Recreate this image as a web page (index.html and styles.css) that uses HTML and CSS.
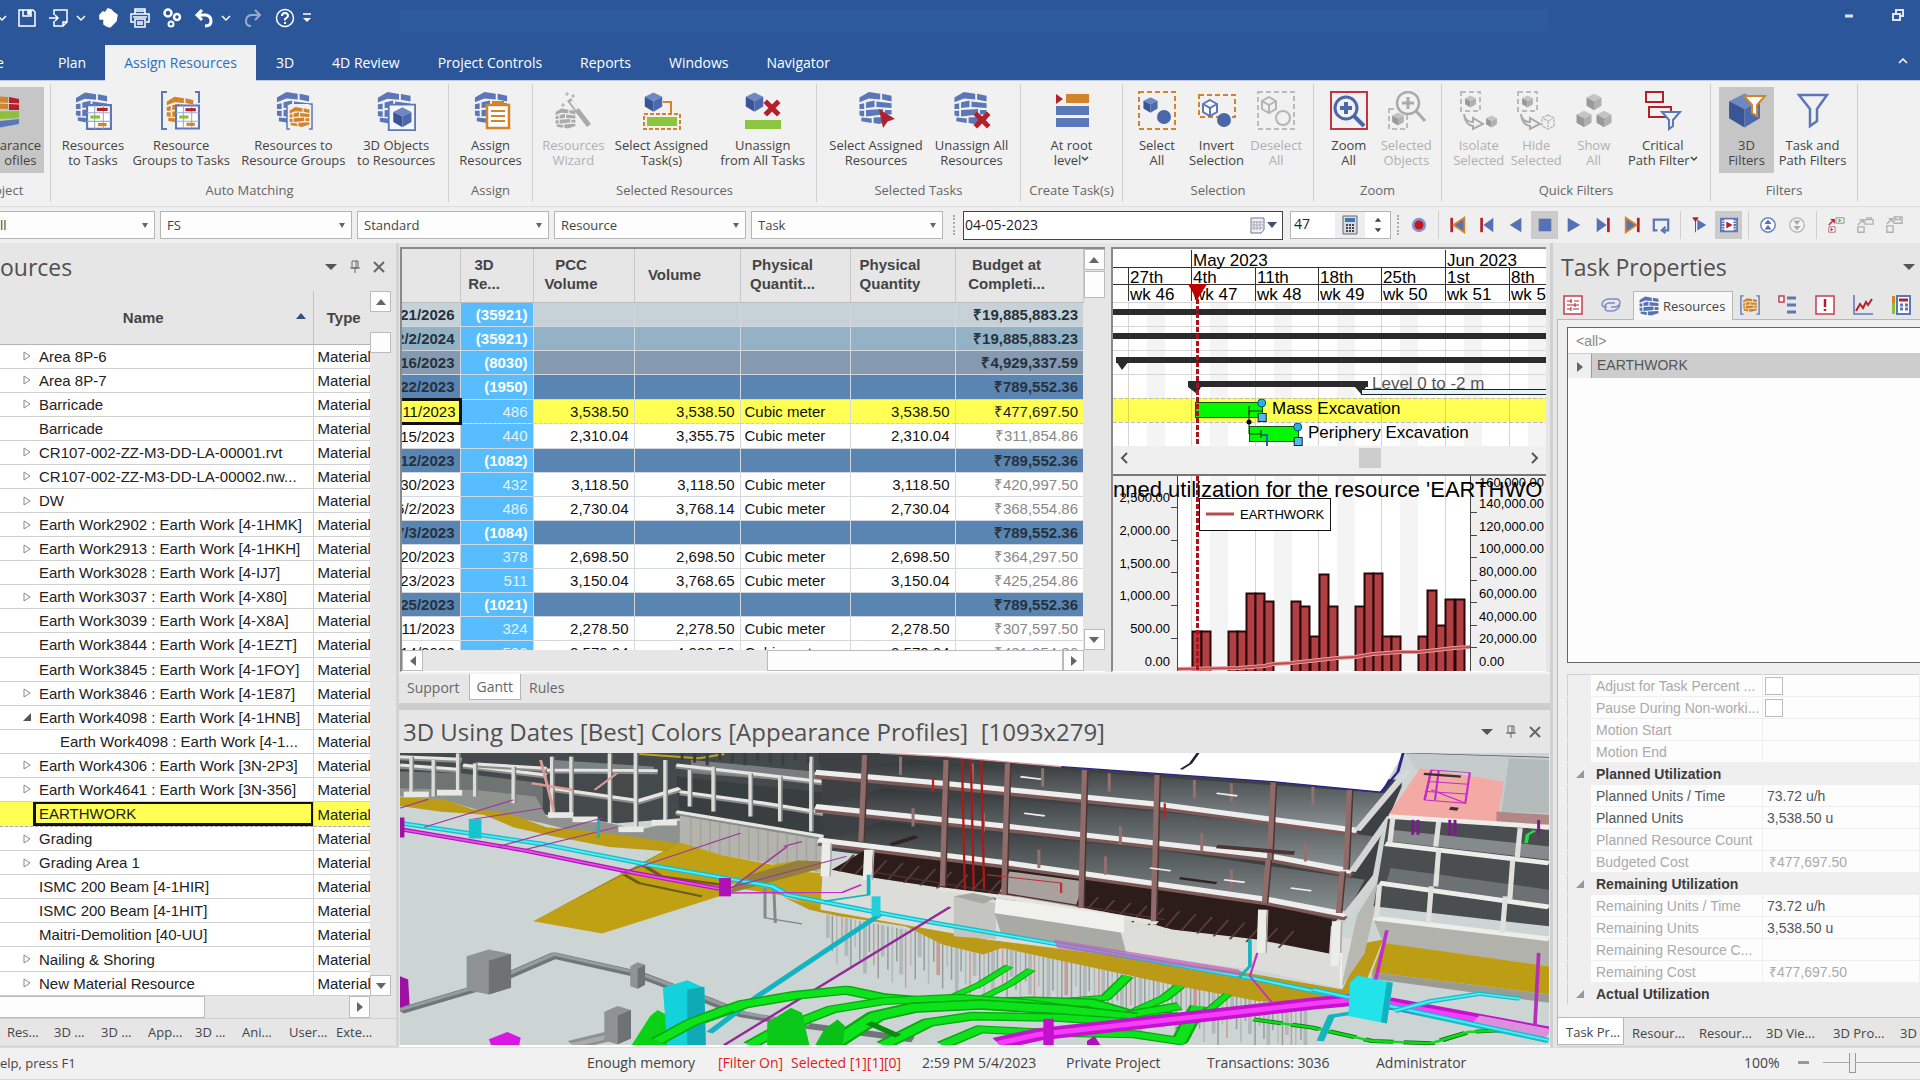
FILE: index.html
```html
<!DOCTYPE html>
<html lang="en">
<head>
<meta charset="utf-8">
<title>Project scheduling workspace</title>
<link rel="stylesheet" href="styles.css">
</head>
<body>
<svg class="defs" aria-hidden="true">
  <symbol id="stack" viewBox="0 0 36 36">
    <path d="M1 7 11 1 23 3V9L11 8 1 12ZM25 3 35 5V11L25 9ZM1 14 6 13V19L1 19ZM8 12 17 10V17L8 18ZM19 11 35 13V18L19 17ZM1 21 6 21V27L1 26ZM8 20 26 19V25L8 27ZM28 20H35V25L28 25ZM3 28 14 29V34L3 32ZM16 28 35 27V31L22 35 16 34Z"/>
  </symbol>
  <symbol id="cube" viewBox="0 0 24 24">
    <path class="c1" d="M12 1 22 6 12 11 2 6Z"/><path class="c2" d="M2 6 12 11V23L2 17Z"/><path class="c3" d="M22 6 12 11V23L22 17Z"/>
  </symbol>
  <symbol id="cal" viewBox="0 0 24 24">
    <path d="M1 1H23V23H1Z" fill="#fff" stroke="#5c77b8" stroke-width="2"/><path d="M8 1V23M16 1V23M1 8H23M1 16H23" stroke="#9aaad2" fill="none"/>
    <path d="M10 5H20" stroke="#b3202c" stroke-width="3"/><path d="M4 12H13" stroke="#8cc03c" stroke-width="3"/><path d="M11 19H19" stroke="#d2842a" stroke-width="3"/>
  </symbol>
  <symbol id="cross" viewBox="0 0 16 16"><path d="M2 2 14 14M14 2 2 14" stroke="#b3202c" stroke-width="4.500"/></symbol>
</svg>

<header class="titlebar">
  <div class="quick">
    <svg class="q q-chev" viewBox="0 0 10 10"><path d="M1 3 5 7 9 3"/></svg>
    <svg class="q" viewBox="0 0 20 20"><path d="M2 2H16L18 4V18H2ZM6 2V8H14V2"/><path d="M11 3H13V6H11Z" fill="#fff"/></svg>
    <svg class="q q-wide" viewBox="0 0 20 20"><path d="M5 7V2H18V14L14 18H5V13M18 14H14V18M0 10H9M6 7 9 10 6 13"/></svg>
    <svg class="q q-chev" viewBox="0 0 10 10"><path d="M1 3 5 7 9 3"/></svg>
    <svg class="q q-wide" viewBox="0 0 20 20"><path d="M2 7 5 4 7 5 10 1 13 2 15 4 19 7 18 13 15 16 12 19 9 18 6 16 6 11 2 11Z" fill="#fff"/></svg>
    <svg class="q q-wide" viewBox="0 0 20 20"><path d="M5 6V1H15V6M4 14H1V6H19V14H16M5 11H15V19H5ZM7 14H13M7 16H13M5 3H15M3 9H17"/></svg>
    <svg class="q q-wide" viewBox="0 0 20 20"><circle cx="6" cy="5" r="3.500" stroke-width="2.500"/><circle cx="15" cy="9" r="3" stroke-width="2.500"/><circle cx="9" cy="16" r="2.500" stroke-width="2"/></svg>
    <svg class="q q-wide" viewBox="0 0 20 20"><path d="M8 2 3 7 8 12M3 7H12Q17 8 17 13 17 18 11 18" stroke-width="3"/></svg>
    <svg class="q q-chev" viewBox="0 0 10 10"><path d="M1 3 5 7 9 3"/></svg>
    <svg class="q q-wide q-dim" viewBox="0 0 20 20"><path d="M12 2 17 7 12 12M17 7H8Q3 8 3 13 3 18 8 18" stroke-width="2"/></svg>
    <svg class="q q-wide" viewBox="0 0 20 20"><circle cx="10" cy="10" r="8.500"/><path d="M7 8Q7 5 10 5 13 5 13 8 13 9 10 11V12.500M10 14V16" stroke-width="2"/></svg>
    <svg class="q q-chev q-more" viewBox="0 0 10 10"><path d="M1 1H9"/><path d="M1 5H9L5 9Z" fill="#fff" stroke="none"/></svg>
  </div>
  <div class="caption"></div>
  <div class="winbtns">
    <svg viewBox="0 0 12 12"><path d="M2 7H10" stroke-width="3"/></svg>
    <svg viewBox="0 0 12 12"><path d="M1 5H8V11H1ZM4 5V1H11V7H8" stroke-width="2"/></svg>
  </div>
</header>
<nav class="tabs">
  <a class="cut" href="#">e</a><a href="#">Plan</a><a class="on" href="#">Assign Resources</a><a href="#">3D</a><a href="#">4D Review</a><a href="#">Project Controls</a><a href="#">Reports</a><a href="#">Windows</a><a href="#">Navigator</a>
  <svg class="collapse" viewBox="0 0 10 10"><path d="M1 7 5 3 9 7"/></svg>
</nav>

<section class="ribbon">
  <div class="group g-object">
    <div class="btns"><button class="rb sel left"><svg viewBox="0 0 40 40"><path d="M0 4 28 6V18L0 17Z" fill="#d2842a"/><path d="M29 6 39 8V19H29Z" fill="#b3202c"/><path d="M0 21 39 20V27L0 29Z" fill="#8cc03c"/><path d="M0 32 39 28V33L0 40Z" fill="#5c77b8"/><path d="M14 4V38M0 11 39 13" stroke="#ddd"/></svg><span>arance<br>ofiles</span></button></div>
    <p>oject</p>
  </div>
  <div class="group g-auto">
    <div class="btns">
      <button class="rb"><svg viewBox="0 0 40 40"><use href="#stack" x="2" width="33" height="34"/><use href="#cal" x="13" y="13" width="26" height="26"/></svg><span>Resources<br>to Tasks</span></button>
      <button class="rb"><svg viewBox="0 0 40 40"><use href="#stack" x="5" y="2" width="28" height="34" fill="#d2842a"/><path d="M6 1H1V38H6M34 1H38V12" fill="none" stroke="#5c77b8" stroke-width="2"/><use href="#cal" x="14" y="13" width="25" height="26"/></svg><span>Resource<br>Groups to Tasks</span></button>
      <button class="rb"><svg viewBox="0 0 40 40"><use href="#stack" x="3" width="34" height="34"/><path d="M14 13H40V39H14Z" fill="#f1f1f1"/><use href="#stack" x="16" y="15" width="21" height="22" fill="#d2842a"/><path d="M17 13H14V38H17M36 13H39V38H36" fill="none" stroke="#5c77b8" stroke-width="1.500"/></svg><span>Resources to<br>Resource Groups</span></button>
      <button class="rb"><svg class="big" viewBox="0 0 44 44"><use href="#stack" width="40" height="38"/><path d="M14 15H43V43H14Z" fill="#f4f6fb" stroke="#5c77b8" stroke-width="2"/><use href="#cube" x="17" y="17" width="24" height="24"/></svg><span>3D Objects<br>to Resources</span></button>
    </div>
    <p>Auto Matching</p>
  </div>
  <div class="group g-assign">
    <div class="btns"><button class="rb"><svg viewBox="0 0 40 40"><use href="#stack" x="3" width="34" height="34"/><path d="M16 14H38V37H16Z" fill="#fff" stroke="#d2842a" stroke-width="2.500"/><path d="M21 10H33V15H21Z" fill="#d2842a"/><path d="M20 20H34M20 25H34M20 30H34" stroke="#d2842a" stroke-width="2"/></svg><span>Assign<br>Resources</span></button></div>
    <p>Assign</p>
  </div>
  <div class="group g-selres">
    <div class="btns">
      <button class="rb" disabled><svg viewBox="0 0 40 40"><use href="#stack" x="2" y="16" width="21" height="23"/><path d="M14 10 18 7 38 33 34 36Z" fill="#aaa"/><path d="M17 11 20 9 26 17 23 19Z" fill="#eee"/><path d="M14 1V5M12 3H16M20 3V7M18 5H22M10 12V16M8 14H12" stroke="#aaa"/></svg><span>Resources<br>Wizard</span></button>
      <button class="rb"><svg viewBox="0 0 40 40"><use href="#cube" x="1" y="0" width="21" height="22"/><path d="M21 11H29V22" fill="none" stroke="#d2842a" stroke-width="2"/><path d="M2 23H38V38H2Z" fill="none" stroke="#d2842a" stroke-width="2" stroke-dasharray="4 2"/><path d="M5 26H35V35H5Z" fill="#8cc63f"/></svg><span>Select Assigned<br>Task(s)</span></button>
      <button class="rb"><svg viewBox="0 0 40 40"><use href="#cube" x="1" y="0" width="21" height="22"/><path d="M2 29H38V38H2Z" fill="#8cc63f"/><use href="#cross" x="20" y="8" width="18" height="18"/></svg><span>Unassign<br>from All Tasks</span></button>
    </div>
    <p>Selected Resources</p>
  </div>
  <div class="group g-seltasks">
    <div class="btns">
      <button class="rb"><svg viewBox="0 0 40 40"><use href="#stack" x="2" width="35" height="34"/><path d="M23 18 39 28 32 30 27 37Z" fill="#b3202c"/></svg><span>Select Assigned<br>Resources</span></button>
      <button class="rb"><svg viewBox="0 0 40 40"><use href="#stack" x="2" width="35" height="34"/><use href="#cross" x="22" y="20" width="18" height="18"/></svg><span>Unassign All<br>Resources</span></button>
    </div>
    <p>Selected Tasks</p>
  </div>
  <div class="group g-create">
    <div class="btns"><button class="rb"><svg viewBox="0 0 40 40"><path d="M4 3 11 8 4 13Z" fill="#b3202c"/><path d="M14 3H37V12H14Z" fill="#d2842a"/><path d="M4 15H37V24H4ZM4 27H37V36H4Z"/></svg><span>At root<br>level<svg class="dd" viewBox="0 0 8 8"><path d="M1 2 4 5 7 2"/></svg></span></button></div>
    <p>Create Task(s)</p>
  </div>
  <div class="group g-select">
    <div class="btns">
      <button class="rb"><svg viewBox="0 0 40 40"><path d="M2 1H38V38H2Z" class="dash"/><use href="#cube" x="5" y="5" width="17" height="18"/><circle cx="27" cy="26" r="7" fill="#4b67aa"/></svg><span>Select<br>All</span></button>
      <button class="rb"><svg viewBox="0 0 40 40"><path d="M2 4H38V26H2Z" class="dash"/><path d="M13 9 20 13V21L13 25 6 21V13ZM6 13 13 17 20 13M13 17V25" fill="#fff" stroke="#5c77b8" stroke-width="2"/><circle cx="27" cy="29" r="7" fill="#4b67aa"/></svg><span>Invert<br>Selection</span></button>
      <button class="rb" disabled><svg viewBox="0 0 40 40"><path d="M2 1H38V38H2Z" class="dash"/><path d="M13 6 20 10V18L13 22 6 18V10ZM6 10 13 14 20 10M13 14V22" fill="none" stroke="#b5b5b5" stroke-width="2"/><circle cx="27" cy="27" r="7" fill="none" stroke="#b5b5b5" stroke-width="2"/></svg><span>Deselect<br>All</span></button>
    </div>
    <p>Selection</p>
  </div>
  <div class="group g-zoom">
    <div class="btns">
      <button class="rb"><svg viewBox="0 0 40 40"><path d="M2 1H38V38H2Z" fill="none" stroke="#c03540" stroke-width="2"/><circle cx="17" cy="17" r="11" fill="none" stroke="#4b67aa" stroke-width="3"/><path d="M25 25 35 35" stroke="#4b67aa" stroke-width="4"/><path d="M17 11V23M11 17H23" stroke="#4b67aa" stroke-width="4"/></svg><span>Zoom<br>All</span></button>
      <button class="rb" disabled><svg viewBox="0 0 40 40"><path d="M3 18H21V38H3Z" class="dash"/><use href="#cube" x="5" y="20" width="14" height="16"/><circle cx="22" cy="12" r="11" fill="#f1f1f1" stroke="#aaa" stroke-width="2.500"/><path d="M30 20 39 30" stroke="#aaa" stroke-width="3"/><path d="M22 6V18M16 12H28" stroke="#aaa" stroke-width="3"/></svg><span>Selected<br>Objects</span></button>
    </div>
    <p>Zoom</p>
  </div>
  <div class="group g-quick">
    <div class="btns">
      <button class="rb" disabled><svg viewBox="0 0 40 40"><path d="M2 1H21V20H2Z" class="dash"/><use href="#cube" x="5" y="3" width="13" height="15"/><path d="M5 23Q6 31 14 31V27L24 33 14 38V35Q6 34 5 23Z" fill="none" stroke="#aaa" stroke-width="2"/><use href="#cube" x="26" y="23" width="13" height="15"/></svg><span>Isolate<br>Selected</span></button>
      <button class="rb" disabled><svg viewBox="0 0 40 40"><path d="M2 1H21V20H2Z" class="dash"/><use href="#cube" x="5" y="3" width="13" height="15"/><path d="M5 23Q6 31 14 31V27L24 33 14 38V35Q6 34 5 23Z" fill="none" stroke="#aaa" stroke-width="2"/><path d="M32 24 38 27V35L32 38 26 35V27ZM28 28 32 30 36 28M32 30V36" fill="none" stroke="#bbb" stroke-width="1.500" stroke-dasharray="3 1"/></svg><span>Hide<br>Selected</span></button>
      <button class="rb" disabled><svg viewBox="0 0 40 40"><use href="#cube" x="11" y="2" width="18" height="18"/><use href="#cube" x="1" y="19" width="18" height="18"/><use href="#cube" x="21" y="19" width="18" height="18"/></svg><span>Show<br>All</span></button>
      <button class="rb"><svg viewBox="0 0 40 40"><path d="M3 1H20V11H3ZM6 16H28V26H6Z" fill="none" stroke="#b3202c" stroke-width="2"/><path d="M19 21H37L30 29V35L26 38V29Z" fill="#f1f1f1" stroke="#5c77b8" stroke-width="2"/></svg><span>Critical<br>Path Filter<svg class="dd" viewBox="0 0 8 8"><path d="M1 2 4 5 7 2"/></svg></span></button>
    </div>
    <p>Quick Filters</p>
  </div>
  <div class="group g-filters">
    <div class="btns">
      <button class="rb sel"><svg viewBox="0 0 40 40"><use href="#cube" x="-1" y="1" width="37" height="37"/><path d="M17 5H38L30 14V25L25 22V14Z" fill="#fff" stroke="#d2842a" stroke-width="2"/></svg><span>3D<br>Filters</span></button>
      <button class="rb"><svg viewBox="0 0 40 40"><path d="M6 4H34L24 18V30L17 35V18Z" fill="none" stroke="#5c77b8" stroke-width="2.500"/></svg><span>Task and<br>Path Filters</span></button>
    </div>
    <p>Filters</p>
  </div>
</section>

<section class="toolbar">
  <label class="combo first"><select aria-label="Layer"><option>ll</option></select></label>
  <label class="combo"><select aria-label="Link type"><option>FS</option></select></label>
  <label class="combo"><select aria-label="Calendar"><option>Standard</option></select></label>
  <label class="combo"><select aria-label="Resource"><option>Resource</option></select></label>
  <label class="combo"><select aria-label="Task"><option>Task</option></select></label>
  <i class="grip"></i>
  <div class="date"><input aria-label="Date" value="04-05-2023"><svg viewBox="0 0 28 18"><path d="M1 2H14V14L11 17H1Z" fill="#eef" stroke="#777"/><path d="M4 5V14M7 5V14M10 5V14M2 6H13M2 9H13M2 12H13" stroke="#aaa"/><path d="M17 6H27L22 12Z" fill="#3c5070"/></svg></div>
  <div class="num"><input aria-label="Day" value="47"><svg class="calc" viewBox="0 0 16 20"><path d="M1 1H15V19H1Z" fill="#d8dbe0" stroke="#667"/><path d="M3 3H13V7H3Z" fill="#3f78b8"/><path d="M4 10H12M4 13H12M4 16H12" stroke="#445" stroke-width="2" stroke-dasharray="2 1"/></svg><svg class="spin" viewBox="0 0 10 20"><path d="M1 6 5 1 9 6ZM1 14H9L5 19Z" fill="#444"/></svg></div>
  <i class="grip tight"></i>
  <button class="tb" aria-label="Record"><svg viewBox="0 0 20 20"><circle cx="10" cy="10" r="8" fill="#8794c8"/><circle cx="10" cy="10" r="5" fill="#c0161e"/></svg></button>
  <i class="bar"></i>
  <button class="tb" aria-label="First"><svg viewBox="0 0 20 20"><path d="M3 2V18" stroke="#b3202c" stroke-width="3"/><path d="M17 2V18L5 10Z" stroke="#d2842a" stroke-width="2"/></svg></button>
  <button class="tb" aria-label="Previous"><svg viewBox="0 0 20 20"><path d="M4 2V18" stroke="#b3202c" stroke-width="3"/><path d="M17 2V18L6 10Z"/></svg></button>
  <button class="tb" aria-label="Back"><svg viewBox="0 0 20 20"><path d="M16 2V18L3 10Z"/></svg></button>
  <button class="tb on" aria-label="Stop"><svg viewBox="0 0 20 20"><path d="M3 3H17V17H3Z"/></svg></button>
  <button class="tb" aria-label="Play"><svg viewBox="0 0 20 20"><path d="M3 2V18L17 10Z"/></svg></button>
  <button class="tb" aria-label="Next"><svg viewBox="0 0 20 20"><path d="M3 2V18L14 10Z"/><path d="M16 2V18" stroke="#b3202c" stroke-width="3"/></svg></button>
  <button class="tb" aria-label="Last"><svg viewBox="0 0 20 20"><path d="M17 2V18" stroke="#b3202c" stroke-width="3"/><path d="M3 2V18L15 10Z" stroke="#d2842a" stroke-width="2"/></svg></button>
  <button class="tb" aria-label="Loop"><svg viewBox="0 0 20 20"><path d="M6 16H2V4H18V16H12M15 12 11 16 15 19" fill="none" stroke="#5c77b8" stroke-width="2.500"/></svg></button>
  <i class="bar"></i>
  <button class="tb" aria-label="Marker"><svg viewBox="0 0 20 20"><path d="M5 4V18M2 2H8L5 6Z" stroke="#b3202c" fill="#b3202c"/><path d="M7 4 17 10 7 16Z"/></svg></button>
  <button class="tb on" aria-label="Movie"><svg viewBox="0 0 20 20"><path d="M1 3H19V17H1Z" fill="#fff" stroke="#5c77b8" stroke-width="2"/><path d="M3.500 3V17M16.500 3V17" stroke="#5c77b8" stroke-width="3" stroke-dasharray="2 1"/><path d="M7 6 14 10 7 14Z" fill="#b3202c"/></svg></button>
  <i class="bar"></i>
  <button class="tb" aria-label="Up"><svg viewBox="0 0 20 20"><circle cx="10" cy="10" r="8" fill="#fff" stroke="#5c77b8" stroke-width="1.500"/><path d="M10 4 14 9H6ZM10 10 14 15H6Z"/></svg></button>
  <button class="tb" aria-label="Down"><svg viewBox="0 0 20 20"><circle cx="10" cy="10" r="8" fill="#f4f4f4" stroke="#b5b5b5" stroke-width="1.500"/><path d="M10 10 14 5H6ZM10 16 14 11H6Z" fill="#aaa"/></svg></button>
  <i class="bar"></i>
  <button class="tb" aria-label="Capture"><svg viewBox="0 0 20 20"><path d="M10 2H19V8H10Z" fill="#eee" stroke="#8a8a9a"/><path d="M2 12H9V18H2Z" fill="#fff" stroke="#b06070"/><path d="M4 13V17L7 15Z" fill="#b3202c"/><path d="M2 10 8 4M4 4H8V8" fill="none" stroke="#b3202c" stroke-width="1.500"/><path d="M13 3V7L16 5Z" fill="#4a4"/></svg></button>
  <button class="tb" aria-label="Lock"><svg viewBox="0 0 20 20"><path d="M10 4H19V9H10ZM12 4V2H17V4M2 12H9V18H2ZM2 10 8 4M4 4H8V8" fill="none" stroke="#b0b0b0" stroke-width="1.500"/></svg></button>
  <button class="tb" aria-label="Save view"><svg viewBox="0 0 20 20"><path d="M10 1H19V8H10ZM12 1V4H17V1M2 11H9V18H2ZM2 9 8 3M4 3H8V7" fill="none" stroke="#b0b0b0" stroke-width="1.500"/></svg></button>
</section>

<main class="main">
  <section class="resources">
    <div class="head"><h2>ources</h2><span class="tools"><svg viewBox="0 0 14 14"><path d="M1 4H13L7 10Z" fill="#555"/></svg><svg viewBox="0 0 14 14"><path d="M4 1H10V8H4ZM2 8H12M7 8V13M8 1V8" class="ln"/></svg><svg viewBox="0 0 14 14"><path d="M2 2 12 12M12 2 2 12" class="ln"/></svg></span></div>
    <div class="res-body">
      <table class="res"><colgroup><col class="c-name"><col></colgroup>
        <thead><tr><th>Name<svg viewBox="0 0 10 10"><path d="M0 8 5 2 10 8Z" fill="#34507c"/></svg></th><th class="ty">Type</th></tr></thead>
        <tbody id="resRows"></tbody>
      </table>
      <div class="vs res-vs"><b class="up"></b><b class="th"></b><b class="dn"></b></div>
    </div>
    <div class="hs res-hs"><b class="th"></b><b class="rt"></b></div>
    <nav class="btabs res-tabs"><a href="#">Res...</a><a href="#">3D ...</a><a href="#">3D ...</a><a href="#">App...</a><a href="#">3D ...</a><a href="#">Ani...</a><a href="#">User...</a><a href="#">Exte...</a></nav>
  </section>

  <section class="center">
    <div class="split">
      <div class="cost">
        <div class="cost-body">
          <div class="clip"><table class="costs">
            <colgroup><col class="k1"><col class="k2"><col class="k3"><col class="k4"><col class="k5"><col class="k6"><col class="k7"></colgroup>
            <thead><tr><th></th><th>3D<br>Re...</th><th>PCC<br>Volume</th><th>Volume</th><th>Physical<br>Quantit...</th><th>Physical<br>Quantity</th><th>Budget at<br>Completi...</th></tr></thead>
            <tbody id="costRows"></tbody>
          </table></div>
          <div class="vs cost-vs"><b class="up"></b><b class="th"></b><b class="dn"></b></div>
        </div>
        <div class="hs cost-hs"><b class="lf"></b><b class="th"></b><b class="rt"></b></div>
      </div>
      <div class="timeline">
        <svg id="gantt" class="gantt"></svg>
        <div class="gscroll"><svg viewBox="0 0 10 12"><path d="M8 1 3 6 8 11"/></svg><i></i><svg viewBox="0 0 10 12"><path d="M2 1 7 6 2 11"/></svg></div>
        <svg id="usage" class="usage"></svg>
      </div>
    </div>
    <nav class="ctabs"><a href="#">Support</a><a class="on" href="#">Gantt</a><a href="#">Rules</a></nav>
    <div class="head view-head"><h2>3D Using Dates [Best] Colors [Appearance Profiles]&nbsp; [1093x279]</h2><span class="tools"><svg viewBox="0 0 14 14"><path d="M1 4H13L7 10Z" fill="#555"/></svg><svg viewBox="0 0 14 14"><path d="M4 1H10V8H4ZM2 8H12M7 8V13M8 1V8" class="ln"/></svg><svg viewBox="0 0 14 14"><path d="M2 2 12 12M12 2 2 12" class="ln"/></svg></span></div>
    <div class="view"><svg id="scene" viewBox="7 39 1552 878" preserveAspectRatio="none"></svg></div>
  </section>

  <section class="props">
    <div class="head"><h2>Task Properties</h2><span class="tools"><svg viewBox="0 0 14 14"><path d="M1 4H13L7 10Z" fill="#555"/></svg></span></div>
    <nav class="ptabs">
      <a href="#" aria-label="General"><svg viewBox="0 0 20 20"><path d="M1 1H19V19H1Z" class="r"/><path d="M4 6H9M11 6H16M4 10H16M4 14H8M10 14H16M8 4V8M12 8V12M8 12V16" stroke="#b3202c"/></svg></a>
      <a href="#" aria-label="Links"><svg viewBox="0 0 20 20"><path d="M6 12H4Q1 12 1 9 2 5 7 4H15Q19 4 19 8 18 12 13 12H10M14 8H8Q3 9 4 13 4 16 8 16H12Q17 15 19 10" fill="none" stroke="#7d90c6" stroke-width="1.500"/></svg></a>
      <a href="#" class="on"><svg viewBox="0 0 20 20"><use href="#stack" width="20" height="20"/></svg>Resources</a>
      <a href="#" aria-label="Resource groups"><svg viewBox="0 0 22 22"><use href="#stack" x="3" y="2" width="16" height="18" fill="#d2842a"/><path d="M4 1H1V21H4M18 1H21V21H18" fill="none" stroke="#5c77b8" stroke-width="1.500"/></svg></a>
      <a href="#" aria-label="Codes"><svg viewBox="0 0 20 20"><path d="M2 1H7V7H2Z" class="r"/><path d="M10 3H19M10 10H19M10 17H19" stroke="#5c77b8" stroke-width="3"/></svg></a>
      <a href="#" aria-label="Alerts"><svg viewBox="0 0 20 20"><path d="M1 1H19V19H1Z" class="r"/><path d="M10 4V12M10 14V16" stroke="#b3202c" stroke-width="2.500"/></svg></a>
      <a href="#" aria-label="Curve"><svg viewBox="0 0 20 20"><path d="M1 0V19H20" fill="none" stroke="#5c77b8" stroke-width="1.500"/><path d="M3 16 7 9 10 13 13 7 15 10 19 4" fill="none" stroke="#b3202c" stroke-width="2"/></svg></a>
      <a href="#" aria-label="Calculator"><svg viewBox="0 0 20 20"><path d="M1 1H4V19H1Z" fill="#d2842a"/><path d="M1 8H4V19H1Z" fill="#8cc03c"/><path d="M6 1H19V19H6Z" fill="#fff" stroke="#5c77b8" stroke-width="2"/><path d="M8 5H17" stroke="#b3202c" stroke-width="3"/><path d="M9 10H17M9 14H17" stroke="#5c77b8" stroke-width="3" stroke-dasharray="3 2"/></svg></a>
    </nav>
    <div class="sheet">
      <div class="list"><div class="all">&lt;all&gt;</div><div class="item"><i><svg viewBox="0 0 8 12"><path d="M1 1 7 6 1 11Z" fill="#666"/></svg></i><span>EARTHWORK</span></div></div>
      <table class="grid"><colgroup><col class="p0"><col class="p1"><col></colgroup><tbody id="propRows"></tbody></table>
    </div>
    <nav class="btabs prop-tabs"><a class="on" href="#">Task Pr...</a><a href="#">Resour...</a><a href="#">Resour...</a><a href="#">3D Vie...</a><a href="#">3D Pro...</a><a href="#">3D</a></nav>
  </section>
</main>

<footer class="status">
  <span class="s-help">elp, press F1</span><span class="s-mem">Enough memory</span><span class="s-filter">[Filter On]</span><span class="s-sel">Selected [1][1][0]</span><span class="s-time">2:59 PM 5/4/2023</span><span class="s-proj">Private Project</span><span class="s-trans">Transactions: 3036</span><span>Administrator</span>
  <div class="zoom"><span>100%</span><i></i><input type="range" aria-label="Zoom" min="0" max="100" value="26"></div>
</footer>
<script src="app.js"></script>
</body>
</html>
```
FILE: styles.css
```css
* { box-sizing: border-box; }
html, body { height: 100%; }
body {
  margin: 0; display: flex; flex-direction: column; overflow: hidden;
  font: 14px/18px "Open Sans", "Noto Sans", sans-serif; color: #444; background: #e6e6e6;
}
a { color: inherit; text-decoration: none; }
h2, p { margin: 0; font-weight: 400; }
button, input, select { font: inherit; color: inherit; }
svg { display: block; flex: none; }
.defs { position: absolute; width: 0; height: 0; }
.c1 { fill: var(--cube1, #6e88c4); } .c2 { fill: var(--cube2, #3a5596); } .c3 { fill: var(--cube3, #4d69ad); }

.titlebar { flex: none; height: 45px; background: #2b579a; display: flex; align-items: flex-start; }
.quick { width: 400px; height: 36px; display: flex; align-items: center; }
.q { width: 20px; height: 20px; margin-left: 10px; fill: none; stroke: #fff; stroke-width: 1.5; }
.q-wide { margin-left: 12px; }
.q-chev { width: 10px; height: 10px; margin-left: 7px; }
.quick .q-chev:first-child { margin-left: -3px; }
.q-dim { opacity: .5; }
.caption { flex: 1; height: 21px; margin-top: 10px; background: #2e5b9e; }
.winbtns { width: 372px; display: flex; justify-content: flex-end; gap: 37px; padding: 9px 16px 0 0; }
.winbtns svg { width: 12px; height: 12px; fill: none; stroke: #dfe6f2; }

.tabs { flex: none; height: 36px; background: #2b579a; display: flex; color: #fff; border-bottom: 1px solid #c3c9dc; }
.tabs a { padding: 9px 19px 0; }
.tabs .cut { padding: 9px 35px 0 0; margin-left: -4px; }
.tabs .on { background: #f1f1f1; color: #2b6fc0; margin: 0 1px -1px 0; }
.collapse { width: 10px; height: 10px; margin: 11px 12px 0 auto; fill: none; stroke: #fff; stroke-width: 1.5; }

.ribbon { flex: none; height: 126px; background: #f1f1f1; display: flex; border-bottom: 1px solid #dcdcdc; padding: 3px 0 4px; }
.group { border-right: 1px solid #d0d0d0; display: flex; flex-direction: column; font-size: 13px; }
.btns { display: flex; flex: 1; padding-top: 3px; }
.group p { text-align: center; color: #666; line-height: 22px; padding-bottom: 1px; }
.rb { flex: 1; width: 0; height: 86px; padding: 4px 0 0; border: 0; background: none; display: flex; flex-direction: column; align-items: center; line-height: 15px; white-space: nowrap; fill: #5c77b8; }
.rb > svg { width: 40px; height: 40px; margin-bottom: 7px; }
.rb > .big { width: 44px; }
.rb span { display: block; }
.rb.sel { background: #c6c6c6; }
.rb.left { align-items: flex-end; padding-right: 3px; }
.rb.left > svg { margin-right: 21px; }
.rb:disabled { color: #b0b0b0; fill: #aaa; --cube1: #c4c4c4; --cube2: #999; --cube3: #b0b0b0; }
.dash { fill: none; stroke: #d2842a; stroke-width: 2; stroke-dasharray: 5 3; }
.rb:disabled .dash { stroke: #bbb; }
.dd { display: inline-block; width: 8px; height: 8px; fill: none; stroke: #444; stroke-width: 1.5; vertical-align: 2px; }
.g-object { width: 51px; } .g-object .btns { padding-right: 6px; } .g-object p { text-align: left; margin-left: -6px; }
.g-auto { width: 398px; } .g-auto .btns { padding: 3px 7px 0 8px; }
.g-auto .rb:nth-child(1) { flex-grow: 68; } .g-auto .rb:nth-child(2) { flex-grow: 109; } .g-auto .rb:nth-child(3) { flex-grow: 116; } .g-auto .rb:nth-child(4) { flex-grow: 90; }
.g-assign { width: 84px; }
.g-selres { width: 284px; } .g-selres .rb:nth-child(1) { flex-grow: 81; } .g-selres .rb:nth-child(2) { flex-grow: 96; } .g-selres .rb:nth-child(3) { flex-grow: 107; }
.g-seltasks { width: 204px; } .g-seltasks .btns { padding: 3px 7px 0 5px; } .g-seltasks .rb:first-child { flex-grow: 1.3; }
.g-create { width: 102px; }
.g-select { width: 191px; } .g-select .btns { padding: 3px 7px 0 4px; }
.g-zoom { width: 128px; } .g-zoom .btns { padding: 3px 6px 0 6px; }
.g-quick { width: 269px; } .g-quick .btns { padding: 3px 7px 0 8px; } .g-quick .rb:nth-child(4) { flex-grow: 1.4; }
.g-filters { width: 147px; } .g-filters .btns { padding: 3px 6px 0 8px; } .g-filters .rb:nth-child(2) { flex-grow: 1.4; }

.toolbar { flex: none; height: 36px; background: #efefef; display: flex; align-items: center; font-size: 13px; }
.combo { position: relative; width: 192px; height: 28px; margin-right: 5px; }
.combo.first { width: 155px; }
.combo select { width: 100%; height: 100%; appearance: none; border: 1px solid #b5b5b5; background: #fdfdfd; padding: 0 6px; border-radius: 0; }
.combo.first select { border-left: 0; padding: 0; }
.combo::after { content: ""; position: absolute; right: 7px; top: 12px; border: 3px solid transparent; border-top: 5px solid #666; border-bottom: 0; }
.grip { width: 2px; height: 20px; margin: 0 8px 0 5px; border-left: 2px dotted #aaa; }
.grip.tight { margin: 0 6px; }
.date { width: 320px; height: 29px; margin-right: 7px; border: 1px solid #444; background: #fff; display: flex; align-items: center; padding-right: 4px; }
.date input, .num input { flex: 1; min-width: 0; border: 0; background: none; padding: 0 1px; color: #222; font-size: 14px; }
.date svg { width: 28px; height: 18px; }
.num { width: 101px; height: 28px; border: 1px solid #b5b5b5; background: #fff; display: flex; align-items: center; }
.num input { padding: 0 0 3px 3px; }
.calc { width: 30px; height: 26px; padding: 3px 7px; background: #eee; }
.spin { width: 8px; height: 16px; margin: 0 8px 0 9px; }
.tb { width: 27px; height: 28px; margin-right: 2px; border: 0; padding: 0; background: none; display: flex; align-items: center; justify-content: center; fill: #5672b5; }
.tb svg { width: 18px; height: 18px; }
.tb.on { background: #cbcbcb; }
.bar { width: 1px; height: 28px; background: #cfcfcf; margin: 0 5px 0 4px; }

.main { flex: 1; min-height: 0; display: flex; }
.head { flex: none; display: flex; align-items: center; justify-content: space-between; height: 49px; }
.head h2 { font-size: 23px; line-height: 28px; color: #505050; white-space: nowrap; }
.tools { display: flex; gap: 10px; } .tools svg { width: 14px; height: 14px; }
.ln { fill: none; stroke: #666; stroke-width: 2; }
.tools svg:nth-child(2) .ln { stroke-width: 1; }

.resources { flex: none; width: 399px; display: flex; flex-direction: column; border-right: 3px solid #d4d4d4; }
.resources .head { padding-right: 10px; height: 48px; }
.res-body { display: flex; flex: 0 1 705px; min-height: 0; overflow: hidden; }
table { border-collapse: collapse; table-layout: fixed; }
td, th { padding: 0; }
.res { width: 370px; font: 15px/23px "Liberation Sans", sans-serif; color: #222; }
.c-name { width: 313px; }
.res thead tr { height: 53px; }
.res th { position: relative; border-bottom: 1px solid #b5b5b5; border-right: 1px solid #c4c4c4; color: #444; text-align: center; }
.res th:first-child { padding-right: 26px; }
.res th svg { position: absolute; right: 7px; top: 20px; width: 10px; height: 10px; }
.res th.ty { border-right: 0; padding-left: 4px; }
.res td { height: 24px; background: #fff; border-bottom: 1px solid #d0d0d0; white-space: nowrap; overflow: hidden; }
.res td:first-child { border-right: 1px solid #d0d0d0; }
.res td:last-child { padding-left: 4px; }
.nm { display: flex; align-items: center; padding-left: 23px; }
.nm b { font-weight: 400; }
.nm svg { width: 10px; height: 10px; margin-right: 6px; }
.nm.sub { padding-left: 44px; }
.res .hit td { background: #ffff54; border-bottom: 1px dashed #aaa; }
.hit .nm b { margin: -1px -1px 0 -6px; padding-left: 3px; flex: 1; border: 3px solid #111; line-height: 19px; }

.vs { display: flex; flex-direction: column; } .hs { display: flex; }
.vs b, .hs b { display: flex; align-items: center; justify-content: center; background: #fdfdfd; border: 1px solid #bbb; flex: none; width: 21px; height: 21px; }
.up::after, .dn::after, .lf::after, .rt::after { content: ""; border: 5px solid transparent; }
.up::after { border-bottom: 6px solid #666; border-top: 0; } .dn::after { border-top: 6px solid #666; border-bottom: 0; }
.lf::after { border-right: 6px solid #666; border-left: 0; } .rt::after { border-left: 6px solid #666; border-right: 0; }
.res-vs .up { margin-bottom: 20px; } .vs .dn { margin-top: auto; }
.res-hs { width: 370px; height: 22px; justify-content: space-between; } .res-hs .th { width: 205px; border-left: 0; }
.hs b { height: 22px; }
.btabs { display: flex; margin-top: auto; }
.res-tabs { height: 29px; border-top: 1px solid #d0d0d0; border-bottom: 1px solid #d0d0d0; padding: 4px 0 0 7px; font-size: 13px; }
.res-tabs a { flex: none; width: 47px; white-space: nowrap; }

.center { flex: 1; min-width: 0; display: flex; flex-direction: column; padding-top: 4px; border-right: 1px solid #d0d0d0; }
.split { flex: none; height: 425px; display: flex; gap: 6px; padding: 0 4px 0 1px; }
.cost { width: 705px; border: 2px solid #8a8a8a; border-right: 0; border-bottom: 1px solid #fff; display: flex; flex-direction: column; }
.cost-body { flex: 1; min-height: 0; display: flex; }
.clip { overflow: hidden; }
.costs { width: 681px; font: 15px/23px "Liberation Sans", sans-serif; color: #111; }
.k1 { width: 58px; } .k2 { width: 73px; } .k3 { width: 101px; } .k4 { width: 106px; } .k5 { width: 110px; } .k6 { width: 105px; } .k7 { width: 128px; }
.costs th { height: 53px; line-height: 19px; color: #444; padding: 0 25px 2px 0; border-right: 1px solid #c8c8c8; border-bottom: 1px solid #bbb; background: #e6e6e6; }
.costs td { height: 24px; border: solid #d3d8de; border-width: 0 1px 1px 0; padding-right: 5px; text-align: right; white-space: nowrap; overflow: hidden; background: #fff; }
.costs td:nth-child(2) { background: #57bdff; color: #e0f4ff; }
.costs td:nth-child(5) { text-align: left; padding-left: 4px; }
.costs td:last-child { color: #888; border-right: 0; }
.costs td div { display: flex; justify-content: flex-end; overflow: hidden; }
.costs .l1 td, .costs .l2 td, .costs .l3 td, .costs .l4 td { font-weight: 700; color: #26323c; }
.costs .l1 td { background: #c6d1d8; } .costs .l2 td { background: #93b2c6; } .costs .l3 td { background: #8599b0; } .costs .l4 td { background: #5a84b2; }
.costs tr[class^="l"] td:nth-child(2) { color: #fff; background: #57bdff; }
.costs .hit td { background: #ffff54; border-bottom: 1px dashed #ccc; } .costs .hit td:last-child { color: #222; }
.costs .hit td:nth-child(2) { background: #57bdff; }
.costs .hit td:first-child { border: 3px solid #111; border-left: 0; padding-right: 3px; line-height: 19px; }
.cost-vs .th { height: 27px; margin-top: 1px; } .cost-vs b { width: 21px; }
.cost-hs { height: 21px; width: 682px; } .cost-hs b { height: 21px; } .cost-hs .th { width: 296px; margin-left: auto; }
.timeline { flex: 1; min-width: 0; border: 2px solid #8a8a8a; border-right: 0; border-bottom: 1px solid #fff; background: #efefef; display: flex; flex-direction: column; }
.gantt { width: 100%; height: 197px; background: #fff; font: 17px "Liberation Sans", sans-serif; }
.gscroll { height: 24px; display: flex; align-items: center; justify-content: space-between; padding: 0 6px; }
.gscroll svg { width: 10px; height: 12px; fill: none; stroke: #555; stroke-width: 2; }
.gscroll i { width: 22px; height: 20px; background: #cdcdcd; margin: 0 -40px 0 40px; }
.usage { width: 100%; flex: 1; min-height: 0; margin-top: 4px; border-top: 2px solid #777; background: #efefef; font: 13px "Liberation Sans", sans-serif; }
.ctabs { flex: none; height: 38px; display: flex; border-bottom: 7px solid #cdcdcd; border-top: 2px solid #f4f4f4; font-size: 14px; color: #666; }
.ctabs a { padding: 5px 9px 0 8px; height: 26px; }
.ctabs .on { background: #fff; border: 1px solid #b5b5b5; border-top: 0; padding: 4px 7px 0; }
.view-head { height: 43px; padding: 0 8px 0 4px; }
.view-head h2 { font-size: 24px; }
.view { flex: 1; min-height: 0; padding: 0 1px; border-bottom: 2px solid #fff; }
.view svg { width: 100%; height: 100%; }

.props { flex: none; width: 369px; display: flex; flex-direction: column; padding-left: 4px; border-left: 2px solid #d0d0d0; }
.props .head { padding: 0 4px; height: 48px; }
.ptabs { flex: none; height: 28px; display: flex; padding-left: 6px; }
.ptabs a { flex: none; width: 38px; display: flex; align-items: center; }
.ptabs a:nth-child(2) { width: 32px; }
.ptabs a:nth-child(4) svg { width: 22px; }
.ptabs .on { width: 100px; gap: 4px; padding-left: 5px; margin-right: 6px; font-size: 13px; background: #f7f7f7; border: 1px solid #b8b8b8; border-bottom: 0; position: relative; margin-bottom: -1px; }
.ptabs svg { width: 20px; height: 20px; fill: #5672b5; }
.ptabs svg .r { fill: #fff; stroke: #c83c4a; stroke-width: 1.5; }
.sheet { flex: 1; min-height: 0; display: flex; flex-direction: column; border: 1px solid #b8b8b8; border-right: 0; background: #efefef; padding: 7px 0 12px 9px; font: 14px/20px "Liberation Sans", sans-serif; }
.list { flex: 1; border: 1px solid #666; border-right: 0; background: #fdfdfd; margin-bottom: 11px; }
.all { height: 26px; padding: 3px 8px; color: #888; border-bottom: 1px solid #ccc; }
.item { display: flex; height: 24px; background: #cdcdcd; color: #555; line-height: 23px; }
.item i { width: 24px; background: #efefef; border-right: 1px solid #999; padding: 7px 8px; margin-right: 5px; } .item svg { width: 8px; height: 12px; }
.grid { width: 100%; border: 1px solid #d0d0d0; border-right: 0; }
.p0 { width: 23px; } .p1 { width: 172px; }
.grid td { height: 22px; background: #fdfdfd; border: solid #efefef; border-width: 0 1px 1px 0; white-space: nowrap; color: #555; line-height: 20px; }
.grid td:nth-child(1) { background: #efefef; }
.grid td:nth-child(2) { padding-left: 5px; }
.grid td:nth-child(3) { padding-left: 4px; }
.grid .cat td { background: #efefef; font-weight: 700; color: #3c3c3c; }
.grid .dim td:nth-child(2) { color: #aaa; }
.grid td.cost-v { color: #aaa; padding-left: 6px; }
.grid svg { width: 8px; height: 8px; margin-left: 8px; }
.grid input { appearance: none; display: block; width: 18px; height: 18px; margin: 0 0 0 -2px; border: 1px solid #bbb; background: #fff; }
.prop-tabs { height: 29px; border-bottom: 1px solid #d0d0d0; font-size: 13px; overflow: hidden; flex: none; }
.prop-tabs a { flex: none; width: 67px; padding: 6px 0 0 8px; white-space: nowrap; }
.prop-tabs .on { background: #fff; border: 1px solid #b5b5b5; border-top: 0; height: 27px; padding-top: 5px; }

.status { flex: none; height: 33px; background: #f1f1f1; display: flex; align-items: center; border-top: 1px solid #ddd; border-bottom: 1px solid #d5d5d5; padding-bottom: 2px; white-space: nowrap; }
.status > span { flex: none; }
.s-help { width: 587px; font-size: 13px; } .s-mem { width: 131px; } .s-filter { width: 73px; color: #e02020; } .s-sel { width: 131px; color: #e02020; } .s-time { width: 144px; } .s-proj { width: 141px; } .s-trans { width: 169px; }
.zoom { margin-left: auto; width: 176px; display: flex; align-items: center; overflow: hidden; }
.zoom i { width: 11px; height: 3px; background: #999; margin: 0 14px 0 18px; flex: none; }
.zoom input { flex: none; width: 110px; height: 20px; margin: 0; appearance: none; background: linear-gradient(#aaa, #aaa) center / 100% 1px no-repeat; }
.zoom input::-webkit-slider-thumb { appearance: none; width: 7px; height: 21px; background: #eee; border: 1px solid #999; }
```
FILE: app.js
```js
// Resource tree: [marker, name], where marker is c(losed), o(pen), ''(leaf) or s(ub item)
const resources = [
  ['c', 'Area 8P-6'], ['c', 'Area 8P-7'], ['c', 'Barricade'], ['', 'Barricade'],
  ['c', 'CR107-002-ZZ-M3-DD-LA-00001.rvt'], ['c', 'CR107-002-ZZ-M3-DD-LA-00002.nw...'], ['c', 'DW'],
  ['c', 'Earth Work2902 : Earth Work [4-1HMK]'], ['c', 'Earth Work2913 : Earth Work [4-1HKH]'],
  ['', 'Earth Work3028 : Earth Work [4-IJ7]'], ['c', 'Earth Work3037 : Earth Work [4-X80]'],
  ['', 'Earth Work3039 : Earth Work [4-X8A]'], ['', 'Earth Work3844 : Earth Work [4-1EZT]'],
  ['', 'Earth Work3845 : Earth Work [4-1FOY]'], ['c', 'Earth Work3846 : Earth Work [4-1E87]'],
  ['o', 'Earth Work4098 : Earth Work [4-1HNB]'], ['s', 'Earth Work4098 : Earth Work [4-1...'],
  ['c', 'Earth Work4306 : Earth Work [3N-2P3]'], ['c', 'Earth Work4641 : Earth Work [3N-356]'],
  ['', 'EARTHWORK'], ['c', 'Grading'], ['c', 'Grading Area 1'], ['', 'ISMC 200 Beam [4-1HIR]'],
  ['', 'ISMC 200 Beam [4-1HIT]'], ['', 'Maitri-Demolition [40-UU]'], ['c', 'Nailing &amp; Shoring'], ['c', 'New Material Resource']
];
const marks = { c: '<path d="M1 1 7 5 1 9Z" fill="none" stroke="#888"/>', o: '<path d="M0 9H8V1Z" fill="#555"/>' };
document.getElementById('resRows').innerHTML = resources.map(([m, n]) =>
  `<tr class="${n === 'EARTHWORK' ? 'hit' : ''}"><td><div class="nm ${m === 's' ? 'sub' : ''}"><svg viewBox="0 0 10 10">${marks[m] || ''}</svg><b>${n}</b></div></td><td>Material</td></tr>`).join('');

// Cost rows: [level, date, 3D count, PCC volume, volume, quantity, budget]
const costs = [
  ['l1', '21/2026', '(35921)', '', '', '', '19,885,883.23'], ['l2', '2/2/2024', '(35921)', '', '', '', '19,885,883.23'],
  ['l3', '16/2023', '(8030)', '', '', '', '4,929,337.59'], ['l4', '22/2023', '(1950)', '', '', '', '789,552.36'],
  ['hit', '11/2023', '486', '3,538.50', '3,538.50', '3,538.50', '477,697.50'], ['', '15/2023', '440', '2,310.04', '3,355.75', '2,310.04', '311,854.86'],
  ['l4', '12/2023', '(1082)', '', '', '', '789,552.36'], ['', '30/2023', '432', '3,118.50', '3,118.50', '3,118.50', '420,997.50'],
  ['', '6/2/2023', '486', '2,730.04', '3,768.14', '2,730.04', '368,554.86'], ['l4', '7/3/2023', '(1084)', '', '', '', '789,552.36'],
  ['', '20/2023', '378', '2,698.50', '2,698.50', '2,698.50', '364,297.50'], ['', '23/2023', '511', '3,150.04', '3,768.65', '3,150.04', '425,254.86'],
  ['l4', '25/2023', '(1021)', '', '', '', '789,552.36'], ['', '11/2023', '324', '2,278.50', '2,278.50', '2,278.50', '307,597.50'],
  ['', '14/2023', '500', '3,570.04', '4,239.50', '3,570.04', '481,954.86']
];
document.getElementById('costRows').innerHTML = costs.map(([c, d, n, p, v, q, b]) =>
  `<tr class="${c}"><td><div>${d}</div></td><td>${n}</td><td>${p}</td><td>${v}</td><td>${p ? 'Cubic meter' : ''}</td><td>${q}</td><td>₹${b}</td></tr>`).join('');

const props = [
  ['dim', 'Adjust for Task Percent ...', '?'], ['dim', 'Pause During Non-worki...', '?'], ['dim', 'Motion Start', ''], ['dim', 'Motion End', ''],
  ['cat', 'Planned Utilization'], ['', 'Planned Units / Time', '73.72 u/h'], ['', 'Planned Units', '3,538.50 u'],
  ['dim', 'Planned Resource Count', ''], ['dim', 'Budgeted Cost', '₹477,697.50'],
  ['cat', 'Remaining Utilization'], ['dim', 'Remaining Units / Time', '73.72 u/h'], ['dim', 'Remaining Units', '3,538.50 u'],
  ['dim', 'Remaining Resource C...', ''], ['dim', 'Remaining Cost', '₹477,697.50'], ['cat', 'Actual Utilization']
];
document.getElementById('propRows').innerHTML = props.map(([c, n, v]) => c === 'cat'
  ? `<tr class="cat"><td><svg viewBox="0 0 8 8"><path d="M0 8H8V0Z" fill="#999"/></svg></td><td colspan="2">${n}</td></tr>`
  : `<tr class="${c}"><td></td><td>${n}</td><td class="${v[0] === '₹' ? 'cost-v' : ''}">${v === '?' ? `<input type="checkbox" aria-label="${n}">` : v}</td></tr>`).join('');

const line = (x1, y1, x2, y2, s, w = 1, extra = '') => `<path d="M${x1} ${y1}L${x2} ${y2}" stroke="${s}" stroke-width="${w}" fill="none" ${extra}/>`;
const rect = (x, y, w, h, f, extra = '') => `<rect x="${x}" y="${y}" width="${w}" height="${h}" fill="${f}" ${extra}/>`;
const text = (x, y, t, extra = '') => `<text x="${x}" y="${y}" ${extra}>${t}</text>`;
const weeks = [15, 78, 142, 205, 268, 332, 396];

// Gantt
let g = '';
weeks.forEach(x => { g += rect(x + 19, 53, 18, 150, '#f4f4f4') + line(x + .5, 53, x + .5, 200, '#d5d5d5'); });
[53, 77, 101, 125].forEach(y => { g += line(0, y + .5, 3000, y + .5, '#d5d5d5'); });
g += rect(0, 149, 3000, 24, '#ffff54') + line(0, 149.5, 3000, 149.5, '#bbb', 1, 'stroke-dasharray="4 2"') + line(0, 173.5, 3000, 173.5, '#bbb', 1, 'stroke-dasharray="4 2"');
weeks.forEach(x => { g += line(x + .5, 149, x + .5, 173, '#d8d84c'); });
g += line(0, 18.5, 3000, 18.5, '#333') + line(0, 35.5, 3000, 35.5, '#333');
weeks.forEach((x, i) => { g += line(x + .5, i === 1 || i === 5 ? 1 : 18, x + .5, 52, '#333'); });
g += text(80, 17, 'May 2023') + text(334, 17, 'Jun 2023');
['27th', '4th', '11th', '18th', '25th', '1st', '8th'].forEach((t, i) => { g += text(weeks[i] + 2, 34, t) + text(weeks[i] + 2, 51, 'wk ' + (46 + i)); });
g += rect(0, 60, 3000, 6, '#2b2b2b') + rect(0, 84, 3000, 6, '#2b2b2b') + rect(3, 108, 3000, 6, '#2b2b2b') + '<path d="M3 112H16L9 121Z" fill="#2b2b2b"/>';
g += '<path d="M75 132H255V138H253L248 145 242 138H88L84 145 75 138Z" fill="#2b2b2b"/>' + text(259, 140, 'Level 0 to -2 m', 'fill="#555"') + rect(248.5, 140.5, 3000, 5, '#e2f5f8', 'stroke="#222"');
g += rect(82.5, 153.5, 67, 15, '#00f800', 'stroke="#145014"') + rect(136.5, 177.5, 49, 15, '#00f800', 'stroke="#145014"');
g += '<path d="M149 162H136V185H148M148 181V189M136 157V166" fill="none" stroke="#083008"/><path d="M149 186H154V198" fill="none" stroke="#2060a0" stroke-width="2"/><circle cx="136" cy="173" r="2.500"/>';
[[148.7, 154], [184.7, 178]].forEach(([x, y]) => { g += `<circle cx="${x}" cy="${y}" r="4" fill="#20b8d8" stroke="#104878"/>` + rect(x - 3.5, y + 10.5, 8, 8, '#58b8e8', 'stroke="#123"'); });
g += text(159, 165, 'Mass Excavation') + text(195, 189, 'Periphery Excavation');
g += line(84.5, 36, 84.5, 200, '#b01018', 3, 'stroke-dasharray="5 2"') + '<path d="M75 35H94L84 51Z" fill="#c00000"/>';
document.getElementById('gantt').innerHTML = g;

// Utilization chart
let u = rect(64, 0, 293, 196, '#fff');
[78, 142, 205, 268, 332].forEach(x => { u += line(x + .5, 0, x + .5, 196, '#d5d5d5') + (x < 332 ? rect(x + 19, 0, 18, 196, '#f4f4f4') : ''); });
const bars = [[272, 483], [299, 483], [381, 483], [408, 483], [435, 370], [462, 370], [490, 393], [570, 393], [598, 408], [626, 499], [653, 311], [681, 408], [762, 408], [790, 308], [817, 308], [844, 497], [871, 497], [952, 497], [979, 361], [1006, 465], [1033, 387], [1061, 387]];
bars.forEach(([x, y]) => { const t = Math.round(y / 3 - 6); u += rect(Math.round(x / 3 - 12) + .5, t + .5, 9, 200 - t, '#b04044', 'stroke="#2a0808" stroke-width="2"'); });
const curve = 'M64 193 125 192 151 190 160 188 178 187 206 184 224 182 242 181 260 178 287 176 305 176 324 174 341 172 357 171';
u += `<path d="${curve}" fill="none" stroke="#e8a0a0" stroke-width="4"/><path d="${curve}" fill="none" stroke="#c04a4e" stroke-width="2"/>`;
u += line(64.5, 0, 64.5, 196, '#444') + line(357.5, 0, 357.5, 196, '#444');
[31, 64, 96, 129, 162].forEach((y, i) => { u += line(58, y + .5, 64, y + .5, '#444') + text(57, [26, 59, 92, 124, 157][i], ['2,500.00', '2,000.00', '1,500.00', '1,000.00', '500.00'][i], 'text-anchor="end"'); });
u += text(57, 190, '0.00', 'text-anchor="end"');
[11, 32, 55, 77, 100, 122, 145, 167, 190].forEach((y, i) => { const n = 160 - 20 * i; u += text(366, y, n ? n + ',000.00' : '0.00') + (i && i < 8 ? line(357, y + 4.5, 364, y + 4.5, '#444') : ''); });
u += line(84.5, 0, 84.5, 196, '#b01018', 3, 'stroke-dasharray="5 2"');
u += rect(86.5, 22.5, 131, 32, '#fff', 'stroke="#111"') + line(93, 38, 121, 38, '#b84a4e', 3) + text(127, 43, 'EARTHWORK');
u += text(0, 21, "nned utilization for the resource 'EARTHWO", 'font-size="22"');
document.getElementById('usage').innerHTML = u;

// 3D model view
const poly = (p, f, extra = '') => `<polygon points="${p}" fill="${f}" ${extra}/>`;
const pl = (p, s, w, extra = '') => `<polyline points="${p}" fill="none" stroke="${s}" stroke-width="${w}" stroke-linejoin="round" ${extra}/>`;
let s = '<defs><linearGradient id="floor" x1="0" y1="0" x2="0" y2="1"><stop offset="0" stop-color="#34383b"/><stop offset="1" stop-color="#8d9496"/></linearGradient></defs>';
s += rect(0, 0, 1600, 940, '#cdd5d4');
// low-rise block on the left
s += poly('7,39 640,39 640,250 580,300 385,235 300,250 205,225 150,190 7,160', '#44494c');
s += poly('7,95 90,100 200,130 200,215 150,200 7,155', '#6e7374') + poly('380,110 625,170 625,250 580,290 385,225', '#393e41') + poly('400,60 640,110 640,140 400,100', '#777d80') + poly('215,60 350,80 350,95 215,85', '#7d8385');
s += poly('7,145 110,150 190,170 205,230 270,240 330,270 390,240 390,315 270,290 200,250 120,215 65,180 7,170', '#8f928e');
s += poly('385,225 580,295 580,400 440,345 385,310', '#b4b4ae');
for (let i = 0; i < 15; i++) s += line(400 + i * 13, 232 + i * 4, 400 + i * 13, 330 + i * 5, '#a5a29b', 2);
['7,75 85,88', '92,75 205,105', '205,90 355,92', '380,75 500,105 635,140', '212,145 330,182 385,145', '385,155 500,190 625,235', '7,50 90,58', '110,72 205,85', '380,215 580,290'].forEach(p => { s += `<g transform="translate(0 7)">${pl(p, '#8a8d8c', 8)}</g>` + pl(p, '#e6e6e2', 9); });
[[22, 50, 170], [52, 60, 170], [85, 40, 165], [108, 70, 170], [160, 80, 190], [212, 50, 235], [238, 50, 225], [290, 40, 250], [325, 39, 265], [365, 60, 245], [398, 90, 200], [430, 80, 215], [480, 100, 230], [520, 110, 245], [562, 50, 275], [605, 70, 230]].forEach(([x, a, b]) => { s += line(x, a, x, b, '#dcdcd9', 5) + line(x + 3, a, x + 3, b, '#7c807f', 2); });
[[30, 163], [75, 158], [225, 225], [258, 238], [320, 268], [365, 248]].forEach(([x, y]) => { s += rect(x - 18, y - 8, 34, 17, '#e8e8e4'); });
s += pl('185,130 240,150', '#dc9a94', 7) + pl('270,150 300,100', '#dc9a94', 4) + pl('197,60 215,215', '#dc9a94', 4) + poly('575,45 660,39 630,65', '#f3b4ae') + pl('330,42 410,55 445,42', '#b8a020', 6);
for (let i = 0; i < 14; i++) s += line(388 + i * 17, 39, 388 + i * 17, 60 + i % 3 * 8, '#3a3e40', 4);
// excavation surfaces
s += poly('7,172 65,178 105,208 150,218 205,262 270,275 388,312 370,335 290,322 215,290 160,262 120,225 60,215 7,198', '#bb9c14');
s += poly('187,545 280,582 445,465 540,395 578,400 578,510 530,470 450,440 520,385 578,365 545,362 510,375 440,345 385,308 335,375', '#c0a114');
s += poly('187,545 385,308 335,375 310,405', '#a88c10') + poly('445,465 578,385 578,365 545,362 480,405', '#93803a');
s += pl('335,375 360,410 440,435', '#6c5c18', 7) + pl('310,405 330,430 415,470', '#6c5c18', 6);
s += poly('1335,608 1559,680 1559,765 1320,698', '#bd9d14') + poly('1320,698 1559,765 1559,790 1320,718', '#9a9c94');
// piles under the excavation
for (let i = 0; i < 105; i++) { const x = 585 + i * 6.2, t = 525 + (x - 585) * .43; s += line(x.toFixed(0), t.toFixed(0), x.toFixed(0), (t + 70 + (i * 37) % 105).toFixed(0), i % 7 === 3 ? '#c89a98' : i % 2 ? '#969c9c' : '#b2b8b8', i % 4 ? 2 : 5); }
s += poly('525,472 580,505 660,530 740,570 800,600 1150,700 1280,750 1310,610 1335,600 1300,790 1270,795 1165,785 1060,740 820,625 795,645 740,615 690,560 600,530 560,510', '#ba9a16');
// tower
s += poly('578,380 1300,600 1310,640 1275,745 1160,690 800,600 575,510', '#dcdcd8');
s += poly('575,39 760,39 1360,120 1360,140 1330,300 1320,420 1265,560 1180,500 580,330', '#3d4144');
const floor = 'url(#floor)';
s += poly('580,97 700,60 1340,160 1300,272 1030,193 740,130', floor);
s += poly('580,200 660,145 1030,215 1325,290 1293,395 1180,348 830,260', floor);
s += poly('580,300 660,245 1030,330 1310,420 1285,525 1180,480 830,370', floor);
s += poly('590,390 640,325 830,380 1180,495 1265,540 1262,642 1165,600 1050,570 985,530 812,480 760,452 640,412', '#2c1c1a');
for (let i = 0; i < 28; i++) { const x = 620 + i * 22, y = 345 + i * 8.5; s += line(x, y, x - 20, y + 50, '#5c3c3a', 3); }
s += poly('755,455 812,478 830,395 930,425 920,500 985,528 980,540', '#a9a19d') + pl('735,447 830,474 1030,550', '#e4e4de', 11);
s += pl('640,395 1040,540', '#4e3030', 4);
['568,97 740,130 1030,193 1300,272', '568,200 830,260 1180,348 1293,395', '572,300 830,370 1180,480 1285,525'].forEach(p => {
  s += `<g transform="translate(0 12)">${pl(p, '#7d5a58', 12)}</g>` + pl(p, '#eeeeec', 15);
});
s += pl('1300,272 1368,92', '#d8d8d8', 10) + pl('1293,395 1345,230', '#d4d4d4', 10) + pl('1285,525 1332,390', '#d4d4d4', 10);
[[635, 45, 305], [745, 60, 440], [828, 70, 465], [932, 90, 505], [1030, 105, 545], [1187, 125, 360], [1180, 360, 490], [1290, 150, 390], [1280, 395, 520]].forEach(([x, a, b]) => { s += line(x, a, x - 5, b, '#8f6c6a', 8) + line(x + 4, a, x - 1, b, '#4c3534', 2); });
[[683, 50], [780, 70], [875, 85], [965, 100], [1080, 120], [1130, 130], [1240, 140], [700, 205], [795, 220], [980, 260], [1090, 280], [1230, 310], [870, 330], [960, 350], [1130, 390]].forEach(([x, y]) => { s += line(x, y, x, y + 55, '#94706e', 4); });
[766, 778, 792].forEach(x => { s += line(x, 48, x + 4, 450, '#b01818', 3); });
s += line(1040, 190, 1040, 235, '#c02020', 3) + line(727, 115, 727, 155, '#c02020', 3) + pl('800,405 900,430 900,460', '#c03030', 3);
s += pl('670,315 705,290', '#302423', 9) + pl('1110,320 1215,340', '#4c3534', 11) + pl('1060,415 1110,430', '#302423', 7);
[[845, 110], [1110, 160], [850, 220], [1120, 420], [1210, 445], [1020, 385]].forEach(([x, y]) => { s += pl(`${x},${y} ${x + 28},${y + 8}`, '#eee', 5); });
[[583, 310, 410], [640, 330, 420], [1172, 510, 640], [1272, 545, 680]].forEach(([x, a, b]) => { s += line(x, a, x - 2, b, '#ecece8', 12) + line(x + 7, a, x + 5, b, '#a8a8a4', 2); });
s += poly('655,39 1362,39 1332,157 1185,125 900,80 745,50', '#fff') + pl('1362,39 1355,95 1332,157 1185,125 900,80', '#2c2488', 4) + pl('1085,39 1075,70 1062,88', '#223', 4) + pl('900,80 745,50 655,39', '#d49a9a', 4);
s += poly('755,470 812,490 812,600 755,590', '#c4c4c0') + poly('755,470 780,460 812,475 795,492', '#a8a8a2') + poly('810,520 980,575 988,640 820,590', '#aaaaa4') + poly('812,475 985,530 985,580 810,520', '#f0f0ec') + poly('990,570 1165,620 1160,690 990,640', '#deded9');
s += poly('1300,525 1335,400 1310,640 1278,745', '#b8b8b2') + line(1278, 640, 1278, 745, '#eee', 3);
// block on the right
s += poly('1365,39 1559,50 1559,225 1490,245 1380,90', '#c6cccc') + poly('1505,55 1559,60 1559,220 1495,215', '#b4bbbb') + pl('1365,39 1559,52', '#555', 2);
s += poly('1385,85 1498,125 1488,250 1342,225', '#f4aaa4') + poly('1488,215 1559,225 1559,260 1488,250', '#b28886');
s += poly('1342,230 1559,270 1559,560 1322,500', '#4a4e51') + poly('1345,270 1559,320 1559,360 1345,305', '#858b8d') + poly('1345,385 1559,450 1559,495 1340,425', '#6c7274') + poly('1322,540 1559,600 1559,680 1335,610', '#b2b2ac');
['1342,230 1559,262', '1338,312 1559,370', '1330,430 1559,502', '1322,535 1559,598'].forEach(p => { s += pl(p, '#edede9', 14); });
[[1410, 245, 75], [1520, 265, 90], [1348, 235, 75], [1400, 440, 110], [1500, 470, 110], [1410, 330, 110], [1510, 360, 120], [1330, 435, 100]].forEach(([x, y, h]) => { s += line(x, y, x - 4, y + h, '#e0e0dc', 7); });
[1375, 1382, 1425, 1432, 1545].forEach(x => { s += line(x, 240, x, 285, '#7c1a8c', 4); });
s += pl('1400,90 1391,180 M', '#c030c8', 3) + pl('1391,180 1400,90 1452,98 1446,190 1391,180', '#c030c8', 3) + pl('1410,92 1405,182', '#c030c8', 3) + pl('1397,125 1449,133', '#c030c8', 3) + pl('1394,155 1447,162', '#c030c8', 3) + pl('1400,150 1446,190', '#c030c8', 3) + line(1390, 102, 1440, 110, '#333', 7) + line(1425, 205, 1436, 208, '#333', 9) + pl('1528,310 1530,285 1540,272', '#20e040', 5);
// grey service run
s += pl('7,815 120,740 215,648 330,705 420,780 470,825 560,860 700,900', '#70757a', 18) + pl('7,811 120,736 215,644 330,701 420,776 470,821 560,856', '#979ca0', 8) + pl('240,917 310,880', '#8e9292', 28) + pl('240,917 310,880', '#a8acac', 12);
[[97, 630, 60, 135], [318, 668, 20, 80], [283, 800, 36, 115]].forEach(([x, y, w, h]) => { s += poly(`${x},${y + h * .15} ${x + w / 2},${y} ${x + w},${y + h * .1} ${x + w},${y + h * .85} ${x + w / 2},${y + h} ${x},${y + h * .9}`, '#8f9396') + poly(`${x + w / 2},${y + h * .25} ${x + w},${y + h * .1} ${x + w},${y + h * .85} ${x + w / 2},${y + h}`, '#6e7275'); });
s += pl('500,445 500,535 550,553', '#888', 4) + pl('512,450 514,550', '#888', 4);
// cyan and magenta networks
const pipe = (p, a, b, w) => pl(p, a, w) + pl(p, b, w * .4);
s += pipe('7,250 200,313 330,370 510,440 530,465 650,518 730,550 1160,717 1559,905', '#16bfcc', '#54ecf4', 13);
s += pipe('7,268 170,330 320,398 440,448', '#b414bc', '#ea50ec', 12) + poly('890,600 1140,690 1150,710 895,625', '#c060b8', 'opacity=".7"');
s += pl('655,525 490,770 425,880', '#12b4c2', 10) + pl('750,502 445,917', '#94289c', 5) + pl('440,460 605,458 630,435', '#c030c8', 4);
[[7, 205, 45, 178], [40, 262, 160, 180], [100, 240, 200, 205], [140, 320, 280, 235], [175, 330, 300, 262], [305, 400, 467, 280], [455, 445, 530, 320], [525, 320, 550, 305], [450, 445, 610, 350]].forEach(a => { s += line(...a, '#9c3a98', 3); });
s += line(275, 240, 275, 295, '#14b4c0', 4) + pl('640,405 640,465 580,485', '#14b4c0', 5) + rect(100, 238, 17, 58, '#14c4d0') + rect(7, 233, 6, 60, '#a010a8') + rect(438, 415, 16, 55, '#b010b8') + rect(644, 470, 12, 60, '#20d0dc');
// green ducts
const duct = (p, w) => pl(p, '#08a80e', w) + pl(p, '#0de31a', w * .7);
[['735,790 790,735 830,680', 14], ['780,790 830,735 860,690', 14], ['900,785 960,775 990,710', 18], ['1000,815 1040,775 1060,740', 18], ['1060,870 1085,840 1125,765', 14]].forEach(([p, w]) => { s += duct(p, w); });
s += duct('350,917 400,850 470,795 540,768 610,752 660,775 740,790 860,785 940,790 1000,830 1050,830', 27);
s += duct('480,917 510,880 590,810 660,785 760,775 850,790 980,830 1060,800', 24) + duct('590,917 650,830 700,805 790,795 900,810 1000,835', 32) + duct('660,917 720,850 780,830 900,835 1000,850 1060,830', 26) + duct('740,917 790,870 880,880 1000,885 1060,905 1085,800', 24);
s += poly('345,830 355,812 370,830 370,917 320,917', '#0ad016') + poly('503,850 535,805 550,820 560,917 503,917', '#0ac818') + poly('580,870 598,840 608,860 605,917 568,917', '#0ac016') + pl('640,850 680,890', '#068c0e', 12);
s += pl('1160,840 1240,865 1320,905 1400,912 1450,878 1559,865', '#0a7a10', 12, 'stroke-dasharray="40 14"') + pl('1160,840 1240,865 1320,905 1400,912 1450,878 1559,865', '#0ddc1a', 7);
// foreground mains and chambers
s += pipe('815,912 870,885 1250,790 1300,780', '#c214cc', '#f83cfc', 36) + pipe('1340,790 1559,880', '#c214cc', '#f83cfc', 34) + pl('1460,840 1559,882', '#dc90dc', 26) + pipe('1240,750 1559,903', '#16bfcc', '#54ecf4', 13);
s += pipe('1350,815 1400,785 1465,763 1520,778', '#16bfcc', '#54ecf4', 13) + pl('1250,905 1265,830 1310,815', '#14b4c0', 10);
s += poly('1290,730 1300,708 1348,730 1340,852 1288,830', '#22e2ea') + poly('1340,727 1348,730 1340,852 1332,848', '#10b4c0');
s += poly('362,745 395,722 418,745 420,917 368,917', '#14d2dc') + poly('395,750 418,742 420,917 395,917', '#0eaab6');
s += duct('355,905 400,850 450,808', 24);
s += poly('127,900 152,878 170,895 168,917 130,917', '#d818e0') + poly('7,710 18,720 20,795 7,805', '#9c10a4') + rect(876, 838, 14, 80, '#c410cc') + poly('935,905 945,890 953,917 935,917', '#b010b8');
s += pl('1340,572 1325,720', '#c030c8', 5) + pl('1545,640 1540,860', '#b030b8', 5) + pl('1165,640 1155,710 1185,790', '#c030c8', 3) + pl('1155,600 1155,680 1140,715', '#14b4c0', 5);
document.getElementById('scene').innerHTML = s;
```
